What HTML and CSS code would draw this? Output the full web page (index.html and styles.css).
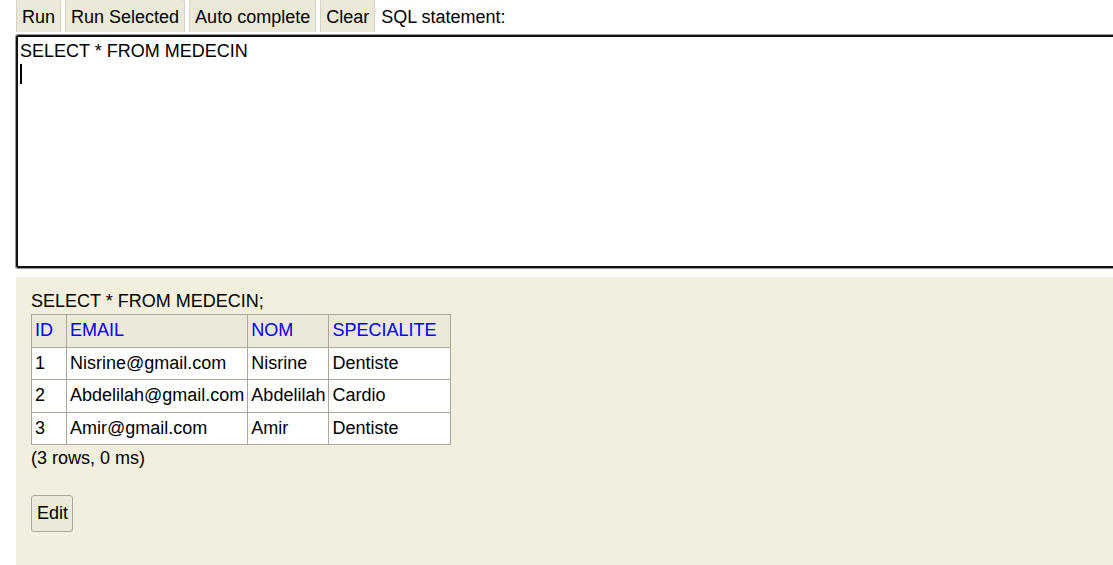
FILE: index.html
```html
<!DOCTYPE html>
<html>
<head>
<meta charset="utf-8">
<link rel="stylesheet" href="styles.css">
</head>
<body>
<div class="page">
  <div class="toolbar">
    <button class="tab">Run</button>
    <button class="tab">Run Selected</button>
    <button class="tab">Auto complete</button>
    <button class="tab">Clear</button>
    <span class="label">SQL statement:</span>
  </div>
  <div class="editor">SELECT * FROM MEDECIN<br><span class="caret"></span></div>
  <div class="result">
    <div class="query">SELECT * FROM MEDECIN;</div>
    <table class="grid">
      <tr class="head"><th class="c1">ID</th><th class="c2">EMAIL</th><th class="c3">NOM</th><th class="c4">SPECIALITE</th></tr>
      <tr><td>1</td><td>Nisrine@gmail.com</td><td>Nisrine</td><td>Dentiste</td></tr>
      <tr><td>2</td><td>Abdelilah@gmail.com</td><td>Abdelilah</td><td>Cardio</td></tr>
      <tr><td>3</td><td>Amir@gmail.com</td><td>Amir</td><td>Dentiste</td></tr>
    </table>
    <div class="stats">(3 rows, 0 ms)</div>
    <button class="edit">Edit</button>
  </div>
</div>
</body>
</html>
```
FILE: styles.css
```css
html, body {
  margin: 0;
  padding: 0;
  background: #fff;
  overflow: hidden;
  height: 565px;
}
body {
  font-family: "Liberation Sans", Arial, sans-serif;
  font-size: 18px;
  color: #000;
}
.page {
  padding-left: 16px;
  margin-right: -20px;
}
.toolbar {
  display: flex;
  align-items: stretch;
  height: 33px;
  gap: 4px;
  margin-top: -1px;
}
.tab {
  font-family: inherit;
  font-size: 18px;
  background: #ece9d8;
  border: 1px solid #d6d3c4;
  border-bottom: none;
  border-radius: 3px 3px 0 0;
  padding: 2px 5px 0;
  margin: 0;
  color: #000;
}
.label {
  display: flex;
  align-items: center;
  padding-top: 3px;
  padding-left: 2px;
}
.editor {
  margin-top: 3px;
  border: 2px solid #111;
  box-shadow: 0 0 0 1px #999;
  border-radius: 2px;
  padding: 3px 2px 4px;
  line-height: 22px;
  box-sizing: content-box;
  height: 222px;
}
.caret {
  display: inline-block;
  width: 2px;
  height: 20px;
  background: #000;
  vertical-align: top;
  margin-top: 2px;
}
.result {
  margin-top: 9px;
  background: #f3efdf;
  height: 290px;
  padding: 13px 15px 0;
}
.query {
  line-height: 22px;
}
.grid {
  border-collapse: collapse;
  margin-top: 2px;
  background: #fff;
}
.grid th, .grid td {
  border: 1px solid #aca899;
  padding: 0 3px;
  height: 31.5px;
  text-align: left;
  font-weight: normal;
  white-space: nowrap;
}
.grid th {
  background: #ece9d8;
  color: #0000ff;
}
.grid .c1 { width: 28px; }
.grid .c2 { width: 174px; }
.grid .c3 { width: 74px; }
.grid .c4 { width: 115px; }
.stats {
  margin-top: 2px;
  line-height: 22px;
}
.edit {
  display: block;
  margin-top: 26px;
  font-family: inherit;
  font-size: 18px;
  background: #ece9d8;
  border: 1px solid #aca899;
  border-radius: 3px;
  padding: 0 4px 0 5px;
  height: 37px;
  color: #000;
}
```
